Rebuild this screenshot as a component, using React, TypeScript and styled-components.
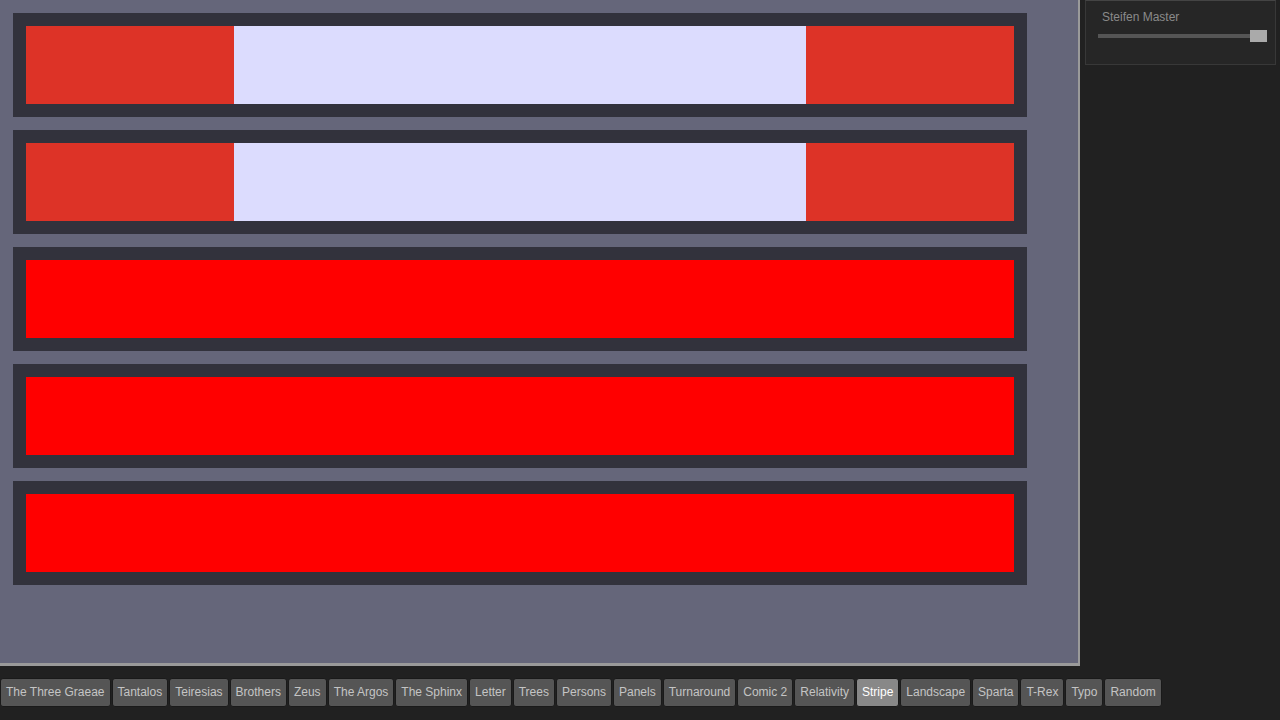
import React from 'react';
import styled, { createGlobalStyle } from 'styled-components';

const GlobalStyle = createGlobalStyle`
  html, body {
    margin: 0;
    padding: 0;
    background: #212121;
    font-family: 'Liberation Sans', Arial, sans-serif;
    overflow: hidden;
  }
`;

const Page = styled.div`
  width: 1280px;
  height: 720px;
  display: flex;
  flex-direction: column;
`;

const Top = styled.div`
  display: flex;
  align-items: flex-start;
`;

const Canvas = styled.div`
  width: 1065px;
  height: 650px;
  background: #65667a;
  border-right: 2px solid #9a9a9a;
  border-bottom: 3px solid #9a9a9a;
  padding: 13px 0 0 13px;
  display: flex;
  flex-direction: column;
  gap: 13px;
  flex-shrink: 0;
`;

const Frame = styled.div`
  width: 988px;
  height: 78px;
  padding: 13px;
  background: #32323c;
  display: flex;
`;

const Band = styled.div<{ $color: string; $w: number }>`
  width: ${(p) => p.$w}px;
  height: 100%;
  background: ${(p) => p.$color};
`;

const Panel = styled.div`
  margin-left: 5px;
  width: 191px;
  height: 65px;
  box-sizing: border-box;
  background: #262626;
  border: 1px solid #383838;
  border-top-color: #444;
  padding: 9px 0 0 12px;
`;

const Label = styled.div`
  color: #8a8a8a;
  font-size: 12px;
  line-height: 14px;
  padding-left: 4px;
`;

const Slider = styled.div`
  position: relative;
  margin-top: 10px;
  width: 169px;
  height: 4px;
  background: #555;
`;

const Thumb = styled.div`
  position: absolute;
  right: 0;
  top: -4px;
  width: 17px;
  height: 12px;
  background: #aaa;
`;

const Toolbar = styled.div`
  display: flex;
  gap: 1px;
  padding-top: 12px;
`;

const Button = styled.div<{ $active?: boolean }>`
  height: 29px;
  box-sizing: border-box;
  padding: 0 5px 1px;
  border: 1px solid #1a1a1a;
  border-radius: 3px;
  background: ${(p) => (p.$active ? '#888' : '#555')};
  color: ${(p) => (p.$active ? '#fff' : '#c4c4c4')};
  font-size: 12px;
  display: flex;
  align-items: center;
  white-space: nowrap;
`;

const splitRow = [
  { color: '#dd3327', w: 208 },
  { color: '#dcdcfe', w: 572 },
  { color: '#dd3327', w: 208 },
];

const redRow = [{ color: '#ff0000', w: 988 }];

const rows = [splitRow, splitRow, redRow, redRow, redRow];

const scenes = [
  'The Three Graeae', 'Tantalos', 'Teiresias', 'Brothers', 'Zeus', 'The Argos', 'The Sphinx',
  'Letter', 'Trees', 'Persons', 'Panels', 'Turnaround', 'Comic 2', 'Relativity', 'Stripe',
  'Landscape', 'Sparta', 'T-Rex', 'Typo', 'Random',
];

export default function App() {
  return (
    <Page>
      <GlobalStyle />
      <Top>
        <Canvas>
          {rows.map((bands, i) => (
            <Frame key={i}>
              {bands.map((b, j) => (
                <Band key={j} $color={b.color} $w={b.w} />
              ))}
            </Frame>
          ))}
        </Canvas>
        <Panel>
          <Label>Steifen Master</Label>
          <Slider>
            <Thumb />
          </Slider>
        </Panel>
      </Top>
      <Toolbar>
        {scenes.map((s) => (
          <Button key={s} $active={s === 'Stripe'}>{s}</Button>
        ))}
      </Toolbar>
    </Page>
  );
}
